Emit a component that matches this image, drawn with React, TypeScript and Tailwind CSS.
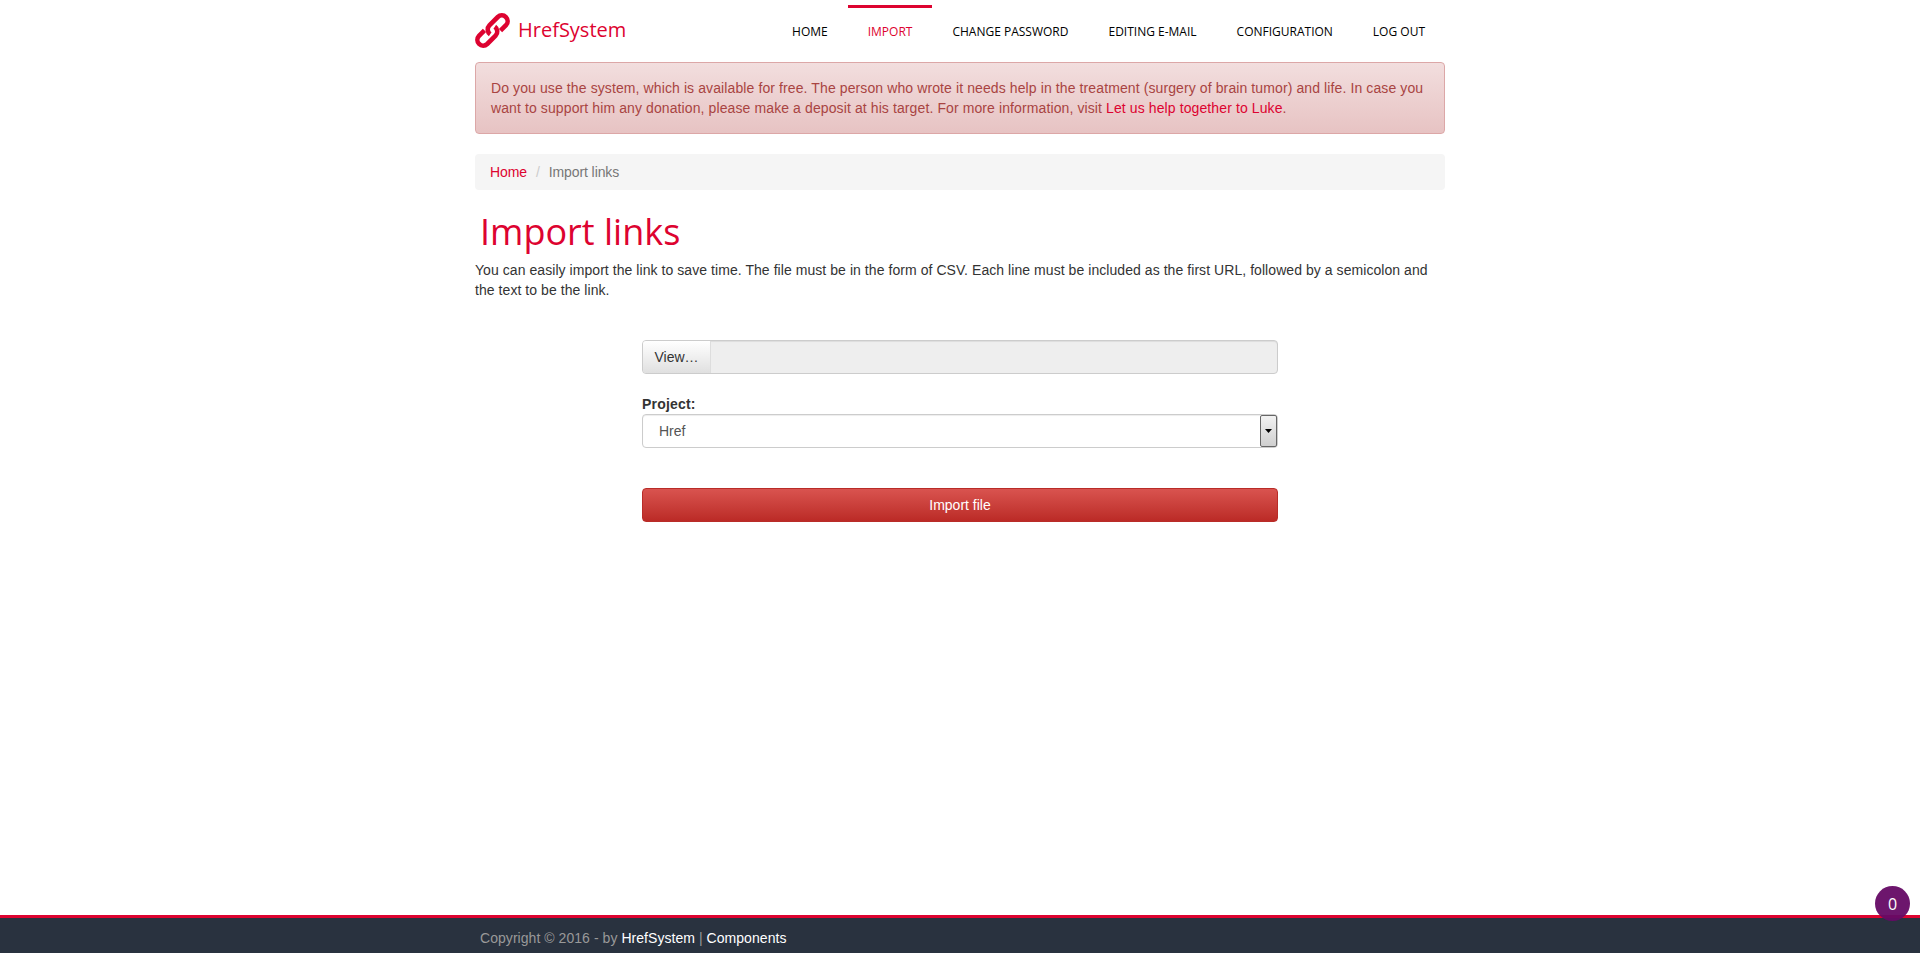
const navItems = ["HOME", "IMPORT", "CHANGE PASSWORD", "EDITING E-MAIL", "CONFIGURATION", "LOG OUT"];

const LinkIcon = () => (
  <svg width="35" height="35" viewBox="0 0 35 35" fill="none" stroke="currentColor" strokeWidth="4.6">
    <path d="M15.2 21.25A5.8 5.8 0 0 1 14.4 12.4L22.8 4A5.8 5.8 0 0 1 31 12.2L25.5 17.7" />
    <path d="M19.8 13.75A5.8 5.8 0 0 1 20.6 22.6L12.2 31A5.8 5.8 0 0 1 4 22.8L9.5 17.3" />
  </svg>
);

const App = () => {
  return (
    <div className="relative flex min-h-[953px] flex-col bg-white font-['Liberation_Sans',Arial,sans-serif] text-[14px] leading-[20px] text-[#333]">
      <div className="mx-auto w-[970px] flex-1">
        {/* header */}
        <header className="flex h-[62px] items-start justify-between">
          <a className="flex items-center gap-[8px] pt-[12px] text-[#dd0330]">
            <LinkIcon />
            <span className="font-['Open_Sans',sans-serif] text-[20px] leading-[36px]">HrefSystem</span>
          </a>
          <nav className="flex pt-[5px]">
            {navItems.map((item) => (
              <a
                key={item}
                className={
                  "block border-t-[3px] px-[20px] pt-[14px] pb-[14px] font-['Open_Sans',sans-serif] text-[12px] leading-[20px] " +
                  (item === "IMPORT" ? "border-[#dd0330] text-[#dd0330]" : "border-transparent text-black")
                }
              >
                {item}
              </a>
            ))}
          </nav>
        </header>

        {/* donation alert */}
        <div className="mb-[20px] h-[72px] rounded-[4px] border border-[#dca7a7] bg-gradient-to-b from-[#f2dede] to-[#e7c3c3] p-[15px] tracking-[0.105px] text-[#a94442] shadow-[0_1px_0_rgba(255,255,255,0.25)]">
          Do you use the system, which is available for free. The person who wrote it needs help in the treatment (surgery of brain tumor) and life. In case you want to support him any donation, please make a deposit at his target. For more information, visit{" "}
          <a className="text-[#dd0330]">Let us help together to Luke</a>.
        </div>

        {/* breadcrumb */}
        <div className="flex h-[36px] items-center rounded-[4px] bg-[#f5f5f5] px-[15px] tracking-[-0.1px]">
          <a className="text-[#dd0330]">Home</a>
          <span className="px-[9px] text-[#ccc]">/</span>
          <span className="text-[#777]">Import links</span>
        </div>

        <h1 className="mt-[22px] mb-[8px] pl-[5px] font-['Open_Sans',sans-serif] text-[36px] leading-[40px] font-normal text-[#dd0330]">
          Import links
        </h1>
        <p className="tracking-[0.06px]">
          You can easily import the link to save time. The file must be in the form of CSV. Each line must be included as the first URL, followed by a semicolon and the text to be the link.
        </p>

        {/* form */}
        <form className="mx-auto mt-[40px] w-[636px]">
          <div className="flex h-[34px] overflow-hidden rounded-[4px] border border-[#ccc] bg-[#eee] shadow-[inset_0_1px_1px_rgba(0,0,0,0.075)]">
            <span className="flex w-[68px] items-center justify-center border-r border-[#ddd] bg-gradient-to-b from-white to-[#e0e0e0] text-[#333]">
              View…
            </span>
          </div>

          <label className="mt-[20px] block h-[20px] leading-[20px] font-bold tracking-[0.2px]">Project:</label>
          <div className="flex h-[34px] items-center justify-between rounded-[4px] border border-[#ccc] bg-white pl-[16px] text-[#555] shadow-[inset_0_1px_1px_rgba(0,0,0,0.075)]">
            <span>Href</span>
            <span className="flex h-[32px] w-[17px] items-center justify-center rounded-[2px] border border-[#666] bg-gradient-to-b from-[#f2f2f2] to-[#cfcfcf]">
              <svg width="7" height="4" viewBox="0 0 7 4">
                <path d="M0 0h7L3.5 4z" fill="#000" />
              </svg>
            </span>
          </div>

          <button
            type="button"
            className="mt-[40px] block h-[34px] w-full rounded-[4px] border border-[#b92c28] bg-gradient-to-b from-[#d9534f] to-[#bb2a26] text-white"
          >
            Import file
          </button>
        </form>
      </div>

      {/* footer */}
      <footer className="h-[38px] overflow-hidden border-t-[3px] border-[#dd0330] bg-[#29323f]">
        <div className="mx-auto w-[970px] pt-[10px] pl-[5px] leading-[20px] tracking-[0.05px] text-[#999]">
          Copyright © 2016 - by <a className="text-white">HrefSystem</a> | <a className="text-white">Components</a>
        </div>
      </footer>

      <div className="absolute top-[886px] right-[10px] flex h-[35px] w-[35px] items-center justify-center rounded-full bg-[#660a66] font-['Open_Sans',sans-serif] text-[16px] text-white opacity-95">
        0
      </div>
    </div>
  );
};

export default App;
